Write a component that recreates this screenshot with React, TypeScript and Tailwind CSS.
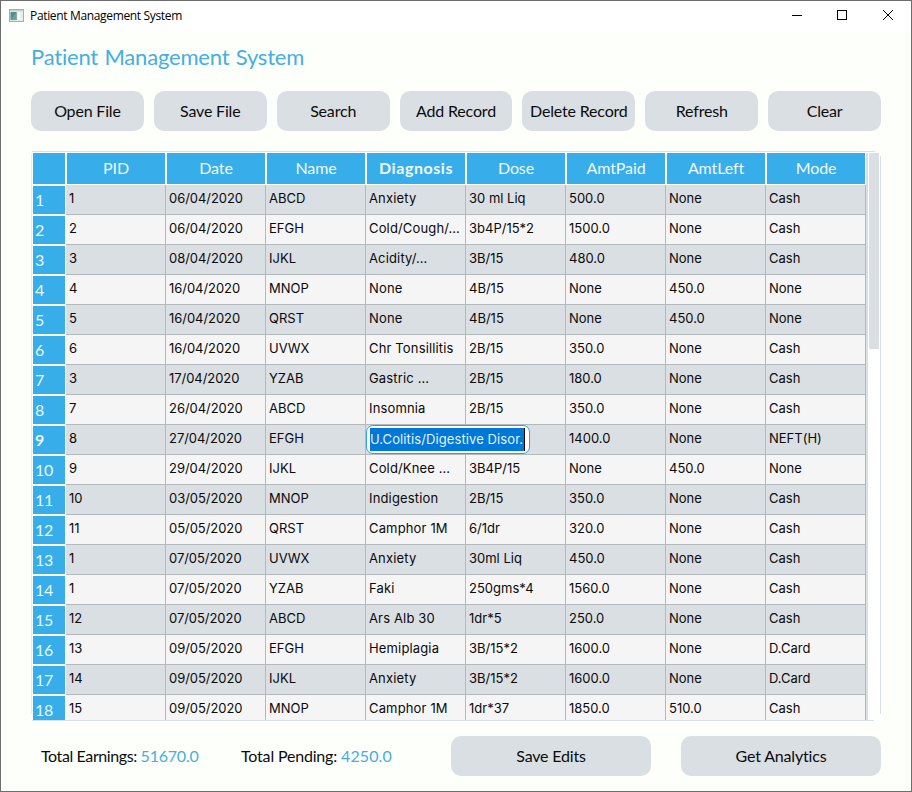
import React from 'react';

const columns = ['PID', 'Date', 'Name', 'Diagnosis', 'Dose', 'AmtPaid', 'AmtLeft', 'Mode'];

const records: string[][] = [
  ['1', '06/04/2020', 'ABCD', 'Anxiety', '30 ml Liq', '500.0', 'None', 'Cash'],
  ['2', '06/04/2020', 'EFGH', 'Cold/Cough/…', '3b4P/15*2', '1500.0', 'None', 'Cash'],
  ['3', '08/04/2020', 'IJKL', 'Acidity/…', '3B/15', '480.0', 'None', 'Cash'],
  ['4', '16/04/2020', 'MNOP', 'None', '4B/15', 'None', '450.0', 'None'],
  ['5', '16/04/2020', 'QRST', 'None', '4B/15', 'None', '450.0', 'None'],
  ['6', '16/04/2020', 'UVWX', 'Chr Tonsillitis', '2B/15', '350.0', 'None', 'Cash'],
  ['3', '17/04/2020', 'YZAB', 'Gastric …', '2B/15', '180.0', 'None', 'Cash'],
  ['7', '26/04/2020', 'ABCD', 'Insomnia', '2B/15', '350.0', 'None', 'Cash'],
  ['8', '27/04/2020', 'EFGH', '', '', '1400.0', 'None', 'NEFT(H)'],
  ['9', '29/04/2020', 'IJKL', 'Cold/Knee …', '3B4P/15', 'None', '450.0', 'None'],
  ['10', '03/05/2020', 'MNOP', 'Indigestion', '2B/15', '350.0', 'None', 'Cash'],
  ['11', '05/05/2020', 'QRST', 'Camphor 1M', '6/1dr', '320.0', 'None', 'Cash'],
  ['1', '07/05/2020', 'UVWX', 'Anxiety', '30ml Liq', '450.0', 'None', 'Cash'],
  ['1', '07/05/2020', 'YZAB', 'Faki', '250gms*4', '1560.0', 'None', 'Cash'],
  ['12', '07/05/2020', 'ABCD', 'Ars Alb 30', '1dr*5', '250.0', 'None', 'Cash'],
  ['13', '09/05/2020', 'EFGH', 'Hemiplagia', '3B/15*2', '1600.0', 'None', 'D.Card'],
  ['14', '09/05/2020', 'IJKL', 'Anxiety', '3B/15*2', '1600.0', 'None', 'D.Card'],
  ['15', '09/05/2020', 'MNOP', 'Camphor 1M', '1dr*37', '1850.0', '510.0', 'Cash'],
];

const EDITED_ROW = 8;
const EDITED_COL = 3;

function Button({ label, className }: { label: string; className: string }) {
  return (
    <button className={`h-10 rounded-[10px] bg-[#dadfe3] text-center text-[16px] tracking-[-0.18px] whitespace-nowrap text-[#0c0c0c] ${className}`}>
      {label}
    </button>
  );
}

function TitleBar() {
  return (
    <header className="flex h-[30px] items-center bg-white pl-2">
      <svg width="15" height="13" viewBox="0 0 15 13" className="-mt-[2px]">
        <rect x="0.5" y="0.5" width="14" height="12" fill="#e4e7e8" stroke="#a9afb1" />
        <path d="M1 1.5H14" stroke="#c6cccd" />
        <rect x="1.500" y="3" width="6" height="8" fill="#4d9088" />
        <path d="M1.500 11L7.500 3V11Z" fill="#6ba09d" />
        <rect x="8.500" y="3" width="3" height="8" fill="#f8f8f8" />
        <rect x="12" y="3" width="1.500" height="8" fill="#eceeee" />
      </svg>
      <span className="ml-[6px] grow font-['Open_Sans','Noto_Sans',sans-serif] text-[12px] tracking-[-0.34px] text-black">
        Patient Management System
      </span>
      <svg width="110" height="12" viewBox="0 0 110 12" fill="none" stroke="#000" className="-mt-[2px] mr-[15px]" shapeRendering="crispEdges">
        <path d="M6 6.500H16" />
        <rect x="51.500" y="1.500" width="9" height="9" />
        <path d="M97 1L107 11M107 1L97 11" shapeRendering="auto" />
      </svg>
    </header>
  );
}

function Editor() {
  return (
    <div className="absolute top-[0px] left-0 z-10 flex h-[29px] w-[164px] items-center rounded-[7px] border border-[#36a0cf] bg-white pl-[3px]">
      <span className="flex h-[23px] w-[155px] items-center border-r border-black bg-[#0078d7] text-[13px] whitespace-nowrap text-[#e4f2fd]">
        <span className="-mt-px tracking-[0.1px]">U.Colitis/Digestive Disor.</span>
      </span>
    </div>
  );
}

function RecordTable() {
  return (
    <section className="relative mt-5 flex h-[570px] border border-[#d8e0e4] border-l-[#e6eef2] bg-white pt-px pl-px">
      <span className="absolute -top-px -left-px h-[3px] w-px bg-[#fdfffa]" />
      <span className="absolute -top-px -right-px h-px w-[6px] bg-[#fdfffa]" />
      <span className="absolute -top-px -right-px h-[5px] w-px bg-[#fdfffa]" />
      <span className="absolute -right-px -bottom-px size-[7px] rounded-tl-[5px] bg-[#fdfffa]" />
      <span className="absolute -bottom-px -left-px h-[7px] w-px bg-[#fdfffa]" />
      <div className="flex h-[567px] w-[833px] flex-col overflow-hidden">
        <div className="flex h-8 shrink-0 border-b border-white">
          <div className="w-[33px] shrink-0 border-r border-white bg-[#37ade9]" />
          {columns.map((name, i) => (
            <div
              key={name}
              className={`flex w-[100px] shrink-0 items-center justify-center border-x border-white bg-[#37ade9] pb-px text-[16px] text-[#f0faff] ${
                i === EDITED_COL ? 'font-bold tracking-[0.55px]' : 'tracking-[-0.1px]'
              }`}
            >
              {name}
            </div>
          ))}
        </div>
        {records.map((record, r) => (
          <div key={r} className="flex h-[30px] shrink-0">
            <div
              className={`w-[33px] shrink-0 border-y border-r border-white bg-[#37ade9] pl-[2px] text-[16px] leading-[27px] tracking-[-0.3px] text-[#e8f7ff] ${
                r === EDITED_ROW ? 'font-bold' : ''
              }`}
            >
              {r + 1}
            </div>
            {record.map((value, c) => (
              <div
                key={c}
                className={`relative w-[100px] shrink-0 border-r border-b border-[#b4b9bc] pl-[3px] font-['Inter',sans-serif] text-[13px] leading-[27px] whitespace-nowrap text-[#0a0a0a] ${
                  r % 2 === 0 ? 'bg-[#dadfe3]' : 'bg-[#f5f5f5]'
                }`}
              >
                {r === EDITED_ROW && c === EDITED_COL ? (
                  <Editor />
                ) : (
                  <span className={c === 3 ? 'tracking-[0.15px]' : c === 1 ? 'tracking-[-0.05px]' : ''}>{value}</span>
                )}
              </div>
            ))}
          </div>
        ))}
      </div>
      <div className="w-[2px] bg-[#dadfe3]" />
      <div className="h-[196px] w-[11px] border-l border-white bg-[#dadfe3]" />
    </section>
  );
}

export default function App() {
  return (
    <main className="h-[792px] w-[912px] overflow-hidden border border-[#6d6d6d] bg-[#fdfffa] font-['Lato',sans-serif] [font-variant-ligatures:none]">
      <TitleBar />
      <div className="px-[30px]">
        <h1 className="flex h-[60px] items-center pb-[10px] text-[22px] tracking-[-0.2px] whitespace-nowrap text-[#45aee2] [word-spacing:1px]">
          Patient Management System
        </h1>
        <nav className="flex gap-[10px]">
          {['Open File', 'Save File', 'Search', 'Add Record', 'Delete Record', 'Refresh', 'Clear'].map((label) => (
            <Button key={label} label={label} className="min-w-0 flex-1" />
          ))}
        </nav>
        <RecordTable />
        <footer className="mt-[15px] flex h-10 items-center pl-[10px] text-[16px] text-[#0c0c0c]">
          <p className="w-[200px]">
            <span className="tracking-[-0.4px]">Total Earnings: </span>
            <span className="tracking-[-0.2px] text-[#45aee2]">51670.0</span>
          </p>
          <p className="w-[210px]">
            <span className="tracking-[-0.18px]">Total Pending: </span>
            <span className="tracking-[0.1px] text-[#45aee2]">4250.0</span>
          </p>
          <Button label="Save Edits" className="w-[200px]" />
          <Button label="Get Analytics" className="ml-[30px] w-[200px]" />
        </footer>
      </div>
    </main>
  );
}
